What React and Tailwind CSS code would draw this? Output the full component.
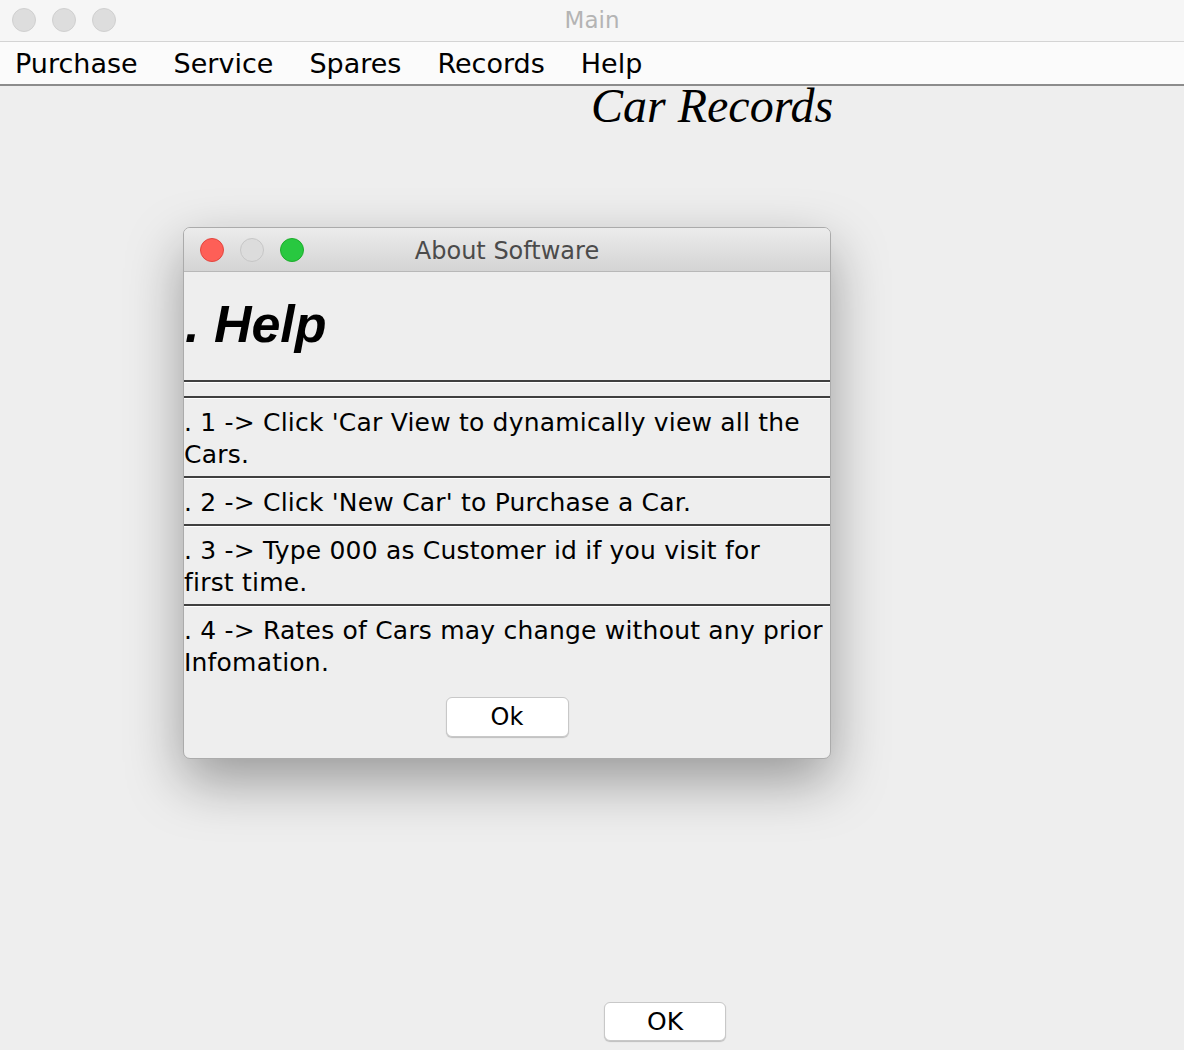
import React from 'react'

const menus = ['Purchase', 'Service', 'Spares', 'Records', 'Help']

// each help entry, split where the dialog wraps it
const rows = [
  { lines: [". 1 -> Click 'Car View to dynamically view all the", 'Cars.'], h: 'h-[77px]' },
  { lines: [". 2 -> Click 'New Car' to Purchase a Car."], h: 'h-[45px]' },
  { lines: ['. 3 -> Type 000 as Customer id if you visit for', 'first time.'], h: 'h-[77px]' },
]

const Separator = () => (
  <div className="flex flex-col">
    <div className="h-[2px] bg-[#404040]" />
    <div className="h-[1px] bg-white" />
  </div>
)

const Light = ({ className }) => (
  <span className={`block w-[24px] h-[24px] rounded-full border ${className}`} />
)

const App = () => {
  return (
    <div
      className="w-[1184px] h-[1050px] bg-[#eeeeee] flex flex-col relative overflow-hidden"
      style={{ fontFamily: '"DejaVu Sans", sans-serif' }}
    >
      {/* main window title bar */}
      <div className="h-[42px] shrink-0 bg-[#f6f6f6] border-b border-[#d4d4d4] relative flex items-center justify-center">
        <div className="absolute left-[12px] top-[8px] flex gap-[16px]">
          <Light className="bg-[#dddddd] border-[#d0d0d0]" />
          <Light className="bg-[#dddddd] border-[#d0d0d0]" />
          <Light className="bg-[#dddddd] border-[#d0d0d0]" />
        </div>
        <span className="text-[23px] text-[#b4b4b4] leading-none">Main</span>
      </div>

      {/* menu bar */}
      <div className="h-[44px] shrink-0 bg-[#fbfbfb] border-b-2 border-[#8c8c8c] flex items-center pl-[15px] gap-[36px]">
        {menus.map(m => (
          <span key={m} className="text-[27px] text-black leading-none pt-[1px]">{m}</span>
        ))}
      </div>

      {/* content */}
      <div className="flex-1 flex flex-col">
        <div
          className="pl-[591px] -mt-[4px] text-[48px] italic leading-none text-black"
          style={{ fontFamily: '"Liberation Serif", serif' }}
        >
          Car Records
        </div>
        <div className="mt-auto mb-[9px] ml-[604px]">
          <button className="w-[122px] h-[39px] bg-white rounded-[6px] border border-[#c8c8c8] shadow-[0_1px_1px_rgba(0,0,0,0.2)] text-[25px] text-black leading-none">
            OK
          </button>
        </div>
      </div>

      {/* About dialog */}
      <div className="absolute left-[183px] top-[227px] w-[648px] h-[532px] rounded-[7px] border border-[#ababab] bg-[#eeeeee] overflow-hidden flex flex-col shadow-[0_22px_55px_rgba(0,0,0,0.36)]">
        <div className="h-[44px] shrink-0 bg-gradient-to-b from-[#ececec] to-[#d4d4d4] border-b border-[#b8b8b8] relative flex items-center justify-center">
          <div className="absolute left-[16px] top-[10px] flex gap-[16px]">
            <Light className="bg-[#fe5f57] border-[#e2463f]" />
            <Light className="bg-[#dcdcdc] border-[#c6c6c6]" />
            <Light className="bg-[#28c840] border-[#1dad2b]" />
          </div>
          <span className="text-[24px] text-[#4b4b4b] leading-none pt-[2px]">About Software</span>
        </div>

        <div className="h-[108px] shrink-0 pt-[26px] pl-[1px]">
          <span
            className="text-[52px] font-bold italic leading-none text-black"
            style={{ fontFamily: '"Liberation Sans", sans-serif' }}
          >
            . Help
          </span>
        </div>
        <Separator />
        <div className="h-[13px] shrink-0" />
        <Separator />

        {rows.map((r, i) => (
          <React.Fragment key={i}>
            <div className={`${r.h} shrink-0 pt-[8px] text-[25px] leading-[32px] tracking-[0.2px] text-black whitespace-nowrap`}>
              {r.lines.map(l => (
                <div key={l}>{l}</div>
              ))}
            </div>
            <Separator />
          </React.Fragment>
        ))}

        <div className="flex-1 flex flex-col pt-[8px] text-[25px] leading-[32px] tracking-[0.2px] text-black whitespace-nowrap">
          <div>. 4 -&gt; Rates of Cars may change without any prior</div>
          <div>Infomation.</div>
          <div className="flex justify-center mt-[18px]">
            <button className="w-[123px] h-[40px] bg-white rounded-[6px] border border-[#c8c8c8] shadow-[0_1px_1px_rgba(0,0,0,0.2)] text-[24px] text-black leading-none">
              Ok
            </button>
          </div>
        </div>
      </div>
    </div>
  )
}

export default App
